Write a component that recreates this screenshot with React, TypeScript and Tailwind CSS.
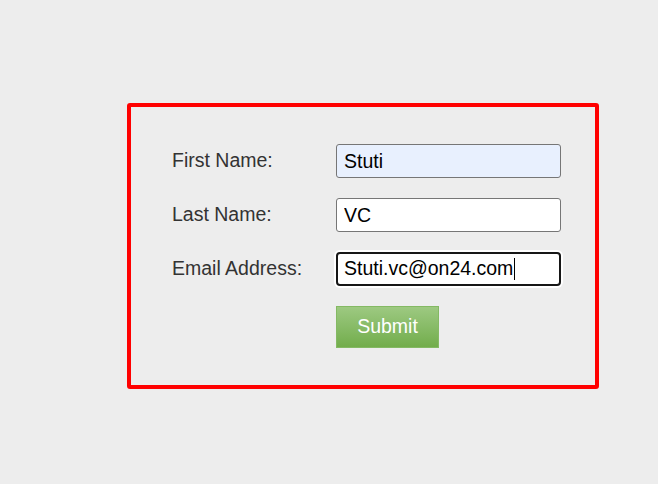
const fieldClass =
  "h-[34px] w-[225px] rounded-[3px] border border-[#767676] px-[7px] text-[19.5px] text-black outline-none";

const Label = ({ text }: { text: string }) => (
  <div className="flex h-[34px] items-center text-[19.5px] text-[#333333]">
    {text}
  </div>
);

const App = () => {
  return (
    <div
      className="min-h-screen w-full bg-[#ededed] pl-[127px] pt-[103px]"
      style={{ fontFamily: '"Liberation Sans", Arial, sans-serif' }}
    >
      <div className="h-[286px] w-[472px] rounded-[3px] border-4 border-[#ff0000] pl-[41px] pt-[37px]">
        <div className="grid grid-cols-[164px_225px] gap-y-[20px]">
          <Label text="First Name:" />
          <input
            readOnly
            value="Stuti"
            className={`${fieldClass} bg-[#e8f0fe]`}
          />

          <Label text="Last Name:" />
          <input readOnly value="VC" className={`${fieldClass} bg-white`} />

          <Label text="Email Address:" />
          <div className="flex h-[34px] w-[225px] items-center rounded-[4px] border-2 border-[#161616] bg-white px-[6px] text-[19.5px] text-black shadow-[0_0_0_2px_#ffffff]">
            <span>Stuti.vc@on24.com</span>
            <span className="ml-px h-[22px] w-px bg-black" />
          </div>

          <div />
          <button className="h-[42px] w-[103px] border border-[#84b963] bg-gradient-to-b from-[#9dc981] to-[#72ad4b] text-[19.5px] text-white">
            Submit
          </button>
        </div>
      </div>
    </div>
  );
};

export default App;
